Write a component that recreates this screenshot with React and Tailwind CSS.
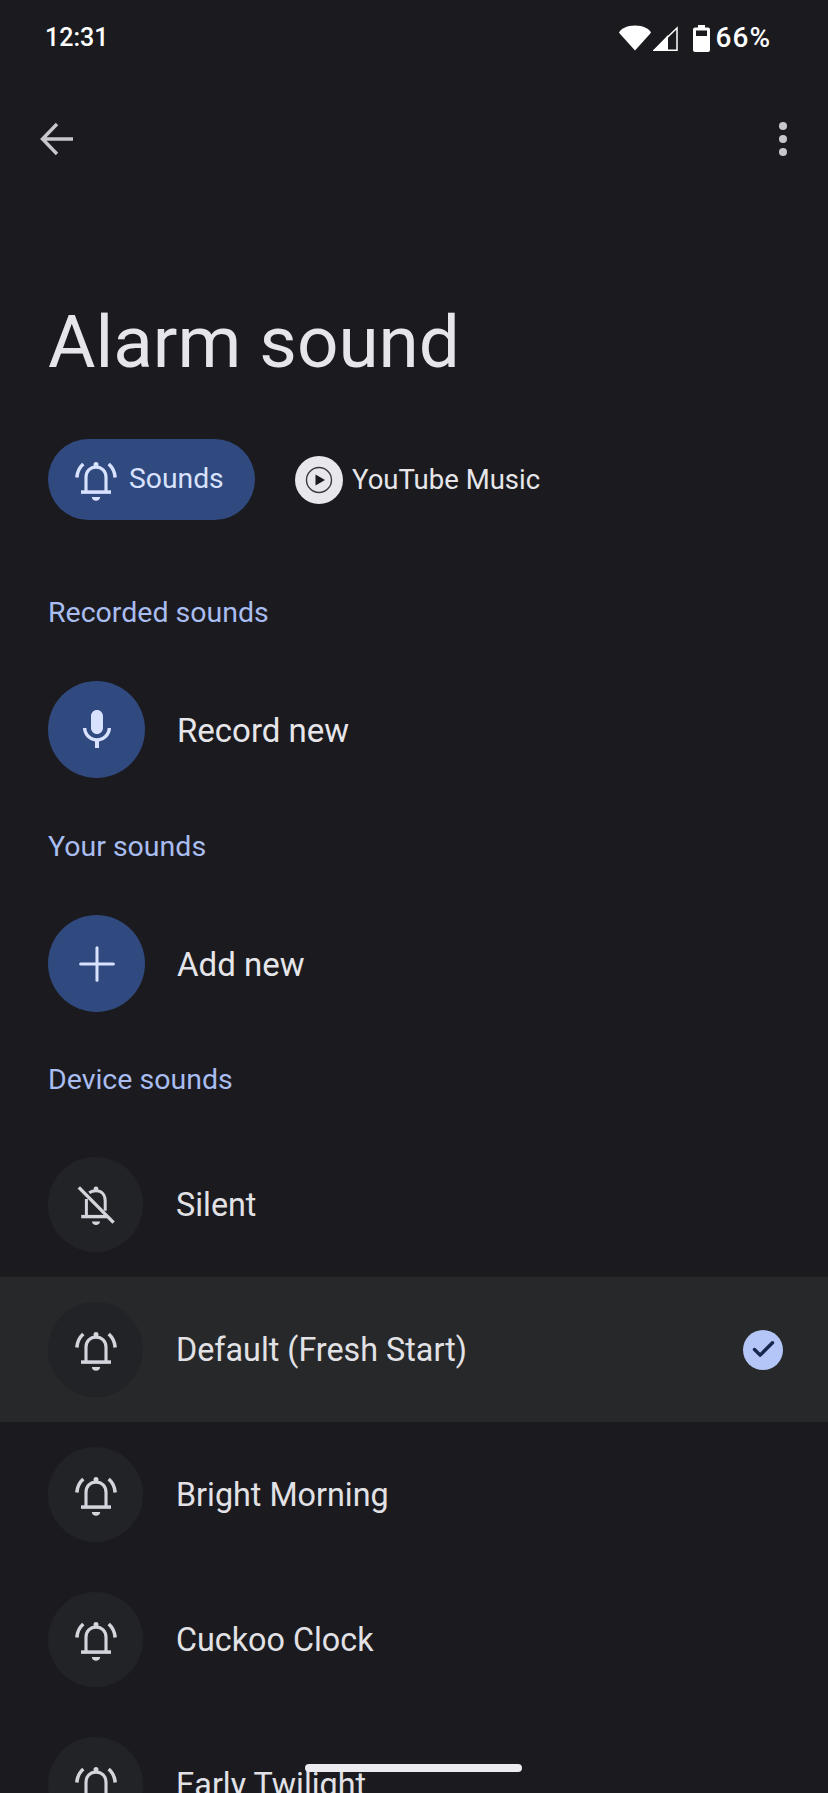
import { Check, Plus } from "lucide-react";

// bell with the two ring arcs, drawn to follow the screenshot
const BellRing = ({ className }) => (
  <svg viewBox="0 0 24 24" fill="none" stroke="currentColor" strokeWidth="1.5" className={className}>
    <path d="M7.200 17.600V10.800c0-3 2-5 4.800-5s4.800 2 4.800 5v6.800" />
    <path d="M4.800 17.800h14.400" strokeWidth="1.700" />
    <path d="M2.800 10.800c.2-2.700 1.300-4.900 3.100-6.500M21.200 10.800c-.2-2.700-1.300-4.900-3.100-6.500" strokeWidth="1.700" />
    <circle cx="12" cy="4.500" r="1.200" fill="currentColor" stroke="none" />
    <path d="M10 20.200h4c0 1-.9 1.800-2 1.800s-2-.8-2-1.800z" fill="currentColor" stroke="none" />
  </svg>
);

const BellOff = ({ className }) => (
  <svg viewBox="0 0 24 24" fill="none" stroke="currentColor" strokeWidth="1.500" className={className}>
    <path d="M8.600 5.900c1-.7 2.100-1 3.400-1 2.800 0 4.600 2 4.600 5v5" />
    <path d="M7.200 9v8.600" />
    <path d="M4.600 17.800h13" strokeWidth="1.700" />
    <path d="M3.400 3.200l17.400 17.600" strokeWidth="1.700" />
    <circle cx="12" cy="3.900" r="1.200" fill="currentColor" stroke="none" />
    <path d="M10 20.200h4c0 1-.9 1.800-2 1.800s-2-.8-2-1.800z" fill="currentColor" stroke="none" />
  </svg>
);

const Mic = ({ className }) => (
  <svg viewBox="0 0 24 24" fill="currentColor" className={className}>
    <path d="M12 14c1.660 0 2.990-1.340 2.990-3L15 5c0-1.660-1.340-3-3-3S9 3.340 9 5v6c0 1.660 1.340 3 3 3zm5.300-3c0 3-2.540 5.100-5.300 5.100S6.700 14 6.700 11H5c0 3.410 2.720 6.230 6 6.720V21h2v-3.280c3.280-.48 6-3.300 6-6.720h-1.700z" />
  </svg>
);

const StatusBar = () => (
  <div className="h-[76px] pl-[45px] pr-[57px] flex items-center justify-between text-white font-['Roboto',sans-serif] font-medium">
    <span className="text-[25px]">12:31</span>
    <div className="flex items-center">
      <svg viewBox="0 0 33 26" className="w-[32px] h-[26px]" fill="currentColor">
        <path d="M16.500 26L0 7.500C1.500 3.500 8 0 16.500 0S31.500 3.500 33 7.500z" />
      </svg>
      <svg viewBox="0 0 25 25" className="w-[25px] h-[25px] ml-[2px]" fill="none" stroke="currentColor">
        <path d="M0 25L15 9v16z" fill="currentColor" stroke="none" />
        <path d="M24 2L1 24.300h23z" strokeWidth="1.500" />
      </svg>
      <svg viewBox="0 0 17 27" className="w-[17px] h-[27px] ml-[15px]" fill="currentColor">
        <path d="M5 0h7v2.500h3c1 0 2 .8 2 2V25c0 1.200-1 2-2 2H2c-1 0-2-.8-2-2V4.500c0-1.200 1-2 2-2h3z" />
        <rect x="3" y="5.500" width="11" height="5.500" fill="#1b1b1f" />
      </svg>
      <span className="ml-[6px] text-[28px] tracking-[1px]">66%</span>
    </div>
  </div>
);

const SectionLabel = ({ children, className }) => (
  <div className={`pl-[48px] text-[#a9bdf0] text-[28.500px] leading-[36px] ${className}`}>{children}</div>
);

const ActionRow = ({ icon, label, className }) => (
  <div className={`pl-[48px] flex items-center ${className}`}>
    <div className="w-[97px] h-[97px] rounded-full bg-[#30497f] text-[#d8e2ff] flex items-center justify-center">
      {icon}
    </div>
    <span className="ml-[32px] pt-[2px] text-[33px] text-[#e6e6ea]">{label}</span>
  </div>
);

const SoundRow = ({ name, off, selected }) => (
  <div className={`h-[145px] shrink-0 pl-[48px] pr-[45px] flex items-center ${selected ? "bg-[#272829]" : ""}`}>
    <div className="w-[95px] h-[95px] rounded-full bg-[#222327] text-[#d4d4dc] flex items-center justify-center">
      {off ? <BellOff className="w-[48px] h-[48px]" /> : <BellRing className="w-[50px] h-[50px]" />}
    </div>
    <span className="ml-[33px] pt-[2px] flex-1 text-[32.300px] text-[#e2e2e6]">{name}</span>
    {selected && (
      <div className="w-[40px] h-[40px] rounded-full bg-[#b4c5f8] text-[#16264d] flex items-center justify-center">
        <Check className="w-[27px] h-[27px]" strokeWidth={3} />
      </div>
    )}
  </div>
);

export default function App() {
  return (
    <div className="relative w-[828px] h-[1793px] overflow-hidden bg-[#1b1b1f] font-['Roboto',sans-serif]">
      <StatusBar />

      {/* toolbar */}
      <div className="h-[126px] pl-[40px] pr-[41px] flex items-center justify-between text-[#c8c8cc]">
        <svg viewBox="0 0 34 34" className="w-[34px] h-[34px]" fill="none" stroke="currentColor" strokeWidth="3.400">
          <path d="M33 17H3M17 2L2.500 17 17 32" />
        </svg>
        <svg viewBox="0 0 8 34" className="w-[8px] h-[34px]" fill="currentColor">
          <circle cx="4" cy="4" r="4" />
          <circle cx="4" cy="17" r="4" />
          <circle cx="4" cy="30" r="4" />
        </svg>
      </div>

      <h1 className="mt-[90px] pl-[48px] pt-[4px] h-[98px] flex items-center text-[72.800px] text-[#e6e6ea]">Alarm sound</h1>

      {/* tabs */}
      <div className="mt-[49px] pl-[48px] flex items-center">
        <div className="w-[207px] h-[81px] rounded-full bg-[#30497f] text-[#d8e2ff] flex items-center pl-[23px]">
          <BellRing className="w-[50px] h-[50px]" />
          <span className="ml-[8px] text-[28.300px]">Sounds</span>
        </div>
        <div className="ml-[40px] w-[48px] h-[48px] rounded-full bg-[#e8e8ec] flex items-center justify-center">
          <svg viewBox="0 0 28 28" className="w-[28px] h-[28px]" fill="none" stroke="#3a3a3e" strokeWidth="1.400">
            <circle cx="14" cy="14" r="12.500" />
            <path d="M10.500 8.500L20 14l-9.500 5.500z" fill="#1b1b1f" stroke="none" />
          </svg>
        </div>
        <span className="ml-[9px] text-[27.500px] text-[#e6e6ea]">YouTube Music</span>
      </div>

      <SectionLabel className="mt-[75px]">Recorded sounds</SectionLabel>
      <ActionRow className="mt-[50px]" icon={<Mic className="w-[48px] h-[48px]" />} label="Record new" />

      <SectionLabel className="mt-[51px]">Your sounds</SectionLabel>
      <ActionRow className="mt-[50px]" icon={<Plus className="w-[56px] h-[56px]" strokeWidth={1.300} />} label="Add new" />

      <SectionLabel className="mt-[50px]">Device sounds</SectionLabel>
      <div className="mt-[34px] flex flex-col">
        <SoundRow name="Silent" off />
        <SoundRow name="Default (Fresh Start)" selected />
        <SoundRow name="Bright Morning" />
        <SoundRow name="Cuckoo Clock" />
        <SoundRow name="Early Twilight" />
      </div>

      {/* gesture bar sits over the list */}
      <div className="absolute left-[305px] top-[1764px] w-[217px] h-[8px] rounded-full bg-[#ececf0]" />
    </div>
  );
}
